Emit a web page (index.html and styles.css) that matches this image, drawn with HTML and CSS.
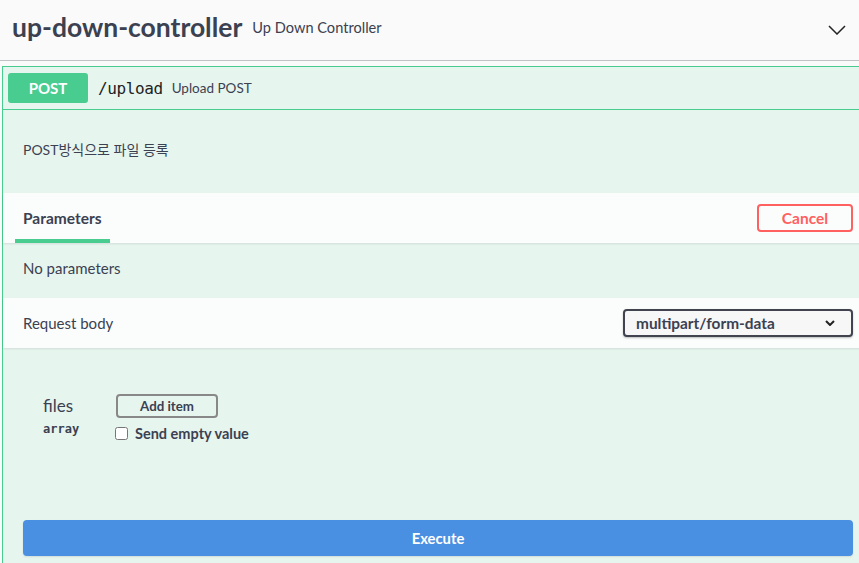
FILE: index.html
```html
<!DOCTYPE html>
<html lang="ko">
<head>
<meta charset="utf-8">
<title>up-down-controller</title>
<link rel="stylesheet" href="styles.css">
</head>
<body>
<div class="wrap">
  <div class="tag-header">
    <span class="tag-title">up-down-controller</span>
    <span class="tag-desc">Up Down Controller</span>
    <svg class="tag-arrow" width="18" height="10" viewBox="0 0 18 10"><polyline points="1,1 9,9 17,1" fill="none" stroke="#222" stroke-width="1.5"/></svg>
  </div>

  <div class="opblock">
    <div class="summary">
      <span class="method">POST</span>
      <span class="path">/upload</span>
      <span class="summary-desc">Upload POST</span>
    </div>

    <div class="description"><p>POST방식으로 파일 등록</p></div>

    <div class="section-header">
      <div class="tab"><span class="tab-label">Parameters</span></div>
      <button class="btn-cancel">Cancel</button>
    </div>

    <div class="params-body">No parameters</div>

    <div class="section-header">
      <span class="section-title">Request body</span>
      <div class="select">
        <span>multipart/form-data</span>
        <svg width="10" height="6" viewBox="0 0 10 6"><polyline points="1,1 5,5 9,1" fill="none" stroke="#222" stroke-width="2"/></svg>
      </div>
    </div>

    <div class="req-body">
      <div class="param-row">
        <div class="param-name">
          <div class="name">files</div>
          <div class="type">array</div>
        </div>
        <div class="param-controls">
          <button class="btn-add">Add item</button>
          <label class="empty"><input type="checkbox" class="chk"><span>Send empty value</span></label>
        </div>
      </div>
    </div>

    <div class="execute-wrap">
      <button class="btn-execute">Execute</button>
    </div>
  </div>
</div>
</body>
</html>
```

FILE: styles.css
```css
html, body {
  margin: 0;
  padding: 0;
  overflow: hidden;
}
body {
  background: #fafafa;
  color: #3b4151;
  font-family: Lato, "Noto Sans CJK KR", sans-serif;
}
.wrap {
  width: 873px;
}
.tag-header {
  box-sizing: border-box;
  height: 61px;
  display: flex;
  align-items: center;
  padding: 0 27px 6px 12px;
  border-bottom: 1px solid rgba(59, 65, 81, 0.3);
}
.tag-title {
  font-size: 26.5px;
  font-weight: 700;
}
.tag-desc {
  font-size: 14.6px;
  margin-left: 10px;
  flex: 1;
}
.tag-arrow {
  display: block;
  margin-top: 6px;
}
.opblock {
  margin: 5px 0 0 2px;
  border: 1px solid #49cc90;
  border-right: none;
  background: rgba(73, 204, 144, 0.1);
}
.summary {
  display: flex;
  align-items: center;
  padding: 6px 5px;
  border-bottom: 1px solid #49cc90;
}
.method {
  width: 80px;
  height: 30px;
  line-height: 30px;
  text-align: center;
  background: #49cc90;
  color: #fff;
  font-weight: 700;
  font-size: 15px;
  border-radius: 3px;
}
.path {
  font-family: "DejaVu Sans Mono", monospace;
  font-size: 16px;
  font-weight: 400;
  padding: 0 9px 0 10px;
  letter-spacing: -0.4px;
  color: #222;
}
.summary-desc {
  font-size: 13.5px;
}
.description {
  padding: 29px 20px 33px;
}
.description p {
  margin: 0;
  font-size: 14px;
  line-height: 21px;
}
.section-header {
  box-sizing: border-box;
  height: 50px;
  display: flex;
  align-items: center;
  justify-content: space-between;
  padding: 0 20px;
  background: rgba(255, 255, 255, 0.8);
  box-shadow: 0 1px 2px rgba(0, 0, 0, 0.1);
}
.tab {
  align-self: stretch;
  display: flex;
  align-items: center;
  position: relative;
}
.tab-label {
  font-size: 15.5px;
  font-weight: 700;
  position: relative;
  height: 100%;
  display: flex;
  align-items: center;
}
.tab-label::after {
  content: "";
  position: absolute;
  left: -8px;
  right: -8px;
  bottom: 0;
  height: 4px;
  background: #49cc90;
}
.btn-cancel {
  box-sizing: border-box;
  width: 96px;
  height: 28px;
  border: 2px solid #ff6060;
  border-radius: 4px;
  background: transparent;
  color: #ff6060;
  font-family: inherit;
  font-size: 15.5px;
  font-weight: 700;
  padding: 0;
}
.params-body {
  padding: 15px 20px 19px;
  font-size: 15px;
  line-height: 21px;
}
.section-title {
  font-size: 15px;
}
.select {
  box-sizing: border-box;
  width: 230px;
  height: 28px;
  border: 2px solid #41444e;
  border-radius: 4px;
  background: #f7f7f7;
  display: flex;
  align-items: center;
  justify-content: space-between;
  padding: 0 16px 0 11px;
  font-size: 15.4px;
  font-weight: 700;
  box-shadow: 0 1px 2px rgba(0, 0, 0, 0.25);
}
.select svg {
  display: block;
}
.req-body {
  box-sizing: border-box;
  height: 152px;
  padding: 46px 20px 0 40px;
}
.param-row {
  display: flex;
}
.param-name {
  width: 72px;
}
.name {
  font-size: 17px;
  line-height: 23px;
}
.type {
  font-family: "DejaVu Sans Mono", monospace;
  font-size: 12px;
  font-weight: 700;
  line-height: 16px;
  margin-top: 4px;
}
.param-controls {
  display: flex;
  flex-direction: column;
  align-items: flex-start;
}
.btn-add {
  box-sizing: border-box;
  width: 102px;
  height: 24px;
  margin-left: 1px;
  border: 2px solid #888;
  border-radius: 4px;
  background: transparent;
  color: #3b4151;
  font-family: inherit;
  font-size: 13.3px;
  font-weight: 700;
  padding: 0;
}
.empty {
  display: flex;
  align-items: center;
  height: 20px;
  margin-top: 5px;
  font-size: 14.5px;
  font-weight: 700;
}
.chk {
  width: 13px;
  height: 13px;
  margin: 0 7px 0 0;
}
.execute-wrap {
  padding: 20px;
}
.btn-execute {
  display: block;
  width: 100%;
  height: 36px;
  border: none;
  border-radius: 4px;
  background: #4990e2;
  color: #fff;
  font-family: inherit;
  font-size: 14.8px;
  font-weight: 700;
  box-shadow: 0 1px 2px rgba(0, 0, 0, 0.1);
}
```
